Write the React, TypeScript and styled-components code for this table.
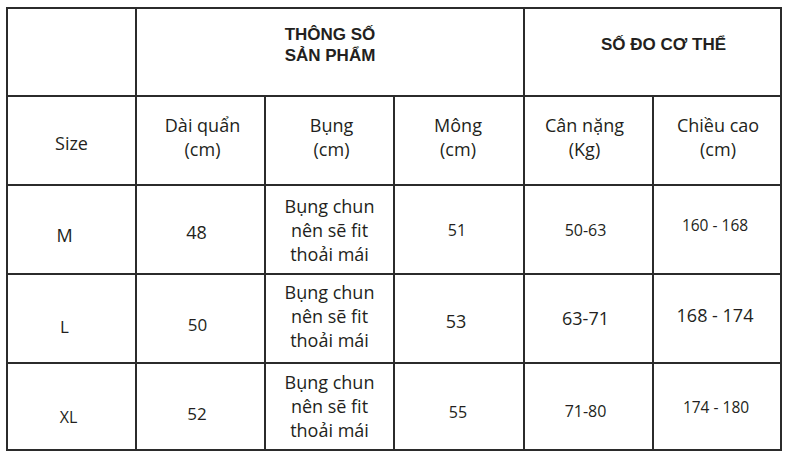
import React from 'react';
import styled, { createGlobalStyle } from 'styled-components';

const GlobalStyle = createGlobalStyle`
  html, body {
    margin: 0;
    background: #fff;
  }
  body {
    font-family: "Open Sans", "Noto Sans", sans-serif;
    color: #231f20;
  }
`;

const Table = styled.div`
  display: grid;
  grid-template-columns: 127px 127px 127px 128px 127px 126px;
  grid-template-rows: 86px 87px 87px 87px 85px;
  gap: 2px;
  padding: 2px;
  width: max-content;
  margin: 7px 0 0 6px;
  background: #2b2b2b;
`;

const Cell = styled.div<{ $span?: number }>`
  grid-column: span ${(p) => p.$span ?? 1};
  display: flex;
  align-items: center;
  justify-content: center;
  background: #fff;
  text-align: center;
`;

type Shift = { $size?: number; $dx?: number; $dy?: number };

const Text = styled.span<Shift>`
  font-size: ${(p) => p.$size ?? 18}px;
  line-height: 24px;
  white-space: pre-line;
  margin-top: ${(p) => Math.max(0, (p.$dy ?? 0) * 2)}px;
  margin-bottom: ${(p) => Math.max(0, -(p.$dy ?? 0) * 2)}px;
  margin-left: ${(p) => Math.max(0, (p.$dx ?? 0) * 2)}px;
  margin-right: ${(p) => Math.max(0, -(p.$dx ?? 0) * 2)}px;
`;

const GroupTitle = styled(Text)`
  font-family: "Liberation Sans", Arial, sans-serif;
  font-weight: bold;
  font-size: 17px;
  line-height: 21px;
`;

type Value = { text: string; size?: number; dx?: number; dy?: number };

const columns: Value[] = [
  { text: 'Size', dy: 2 },
  { text: 'Dài quẩn\n(cm)', dx: 2, dy: -4 },
  { text: 'Bụng\n(cm)', dx: 2, dy: -4 },
  { text: 'Mông\n(cm)', dx: -1, dy: -4 },
  { text: 'Cân nặng\n(Kg)', dx: -4, dy: -4 },
  { text: 'Chiều cao\n(cm)', dx: 1, dy: -4 },
];

const waist = 'Bụng chun\nnên sẽ fit\nthoải mái';

const rows: Value[][] = [
  [
    { text: 'M', size: 18, dx: -7, dy: 5 },
    { text: '48', size: 18, dx: -4, dy: 2 },
    { text: waist, size: 18 },
    { text: '51', size: 16, dx: -2, dy: 0 },
    { text: '50-63', size: 16, dx: -3, dy: 0 },
    { text: '160 - 168', size: 15.5, dx: -2, dy: -5 },
  ],
  [
    { text: 'L', size: 17, dx: -7, dy: 8.5 },
    { text: '50', size: 17, dx: -3, dy: 6.5 },
    { text: waist, size: 18, dy: -3 },
    { text: '53', size: 18, dx: -3, dy: 2 },
    { text: '63-71', size: 18, dx: -3, dy: -1 },
    { text: '168 - 174', size: 18, dx: -2, dy: -4 },
  ],
  [
    { text: 'XL', size: 16, dx: -3, dy: 10.5 },
    { text: '52', size: 17, dx: -3.5, dy: 7 },
    { text: waist, size: 18, dy: -1 },
    { text: '55', size: 16, dx: -1, dy: 5.5 },
    { text: '71-80', size: 16, dx: -3, dy: 4 },
    { text: '174 - 180', size: 15.5, dx: -1, dy: 0 },
  ],
];

export default function App() {
  return (
    <>
      <GlobalStyle />
      <Table>
        <Cell />
        <Cell $span={3}>
          <GroupTitle $dy={-7}>{'THÔNG SỐ\nSẢN PHẨM'}</GroupTitle>
        </Cell>
        <Cell $span={2}>
          <GroupTitle $dx={11} $dy={-8}>SỐ ĐO CƠ THỂ</GroupTitle>
        </Cell>

        {columns.map((v) => (
          <Cell key={v.text}>
            <Text $dx={v.dx} $dy={v.dy}>
              {v.text}
            </Text>
          </Cell>
        ))}

        {rows.map((row, r) =>
          row.map((v, c) => (
            <Cell key={`${r}-${c}`}>
              <Text $size={v.size} $dx={v.dx} $dy={v.dy}>
                {v.text}
              </Text>
            </Cell>
          ))
        )}
      </Table>
    </>
  );
}
